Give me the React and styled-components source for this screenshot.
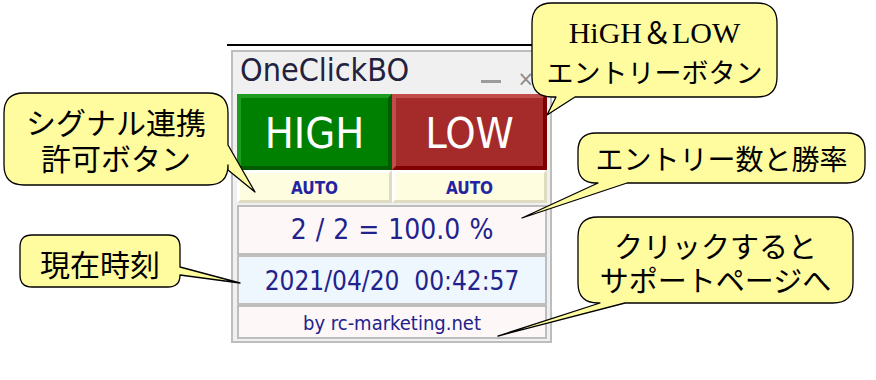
import React from "react";
import styled, { createGlobalStyle } from "styled-components";

const GlobalStyle = createGlobalStyle`
  html, body { margin: 0; padding: 0; background: #ffffff; }
  * { box-sizing: border-box; }
`;

const PANEL_FONT = `"DejaVu Sans Condensed", "DejaVu Sans", sans-serif`;

const Stage = styled.div`
  position: relative;
  width: 876px;
  height: 380px;
  overflow: hidden;
  padding: 44px 0 0 227px;
  background: #ffffff;
`;

const TopRule = styled.div`
  width: 320px;
  height: 2px;
  background: #000000;
`;

const Panel = styled.div`
  margin: 4px 0 0 4px;
  width: 321px;
  border: 2px solid #bdbdbd;
  background: #f0f0f0;
  padding: 0 3px 2px 4px;
  display: flex;
  flex-direction: column;
  font-family: ${PANEL_FONT};
  font-stretch: condensed;
`;

const TitleBar = styled.div`
  height: 42px;
  display: flex;
  align-items: flex-start;
  padding: 2px 13px 0 3px;
`;

const Title = styled.span`
  font-size: 32px;
  line-height: 32px;
  color: #22223e;
`;

const Controls = styled.div`
  margin-left: auto;
  display: flex;
  align-items: center;
  gap: 16px;
  height: 40px;
`;

const MinBar = styled.span`
  display: block;
  width: 20px;
  height: 3px;
  margin-top: 14px;
  background: #9c9c9c;
`;

const CloseGlyph = styled.span`
  font-family: "DejaVu Sans", sans-serif;
  font-size: 22px;
  line-height: 22px;
  margin-top: 10px;
  color: #8a8a8a;
`;

const ButtonRow = styled.div`
  display: grid;
  grid-template-columns: 155px 155px;
  height: 76px;
`;

const TradeButton = styled.div`
  display: flex;
  align-items: center;
  justify-content: center;
  border: 4px solid;
  border-color: ${(p) =>
    p.$kind === "high"
      ? "#1f9b1f #005c00 #005c00 #1f9b1f"
      : "#c24b4b #800000 #800000 #c24b4b"};
  background: ${(p) => (p.$kind === "high" ? "#008000" : "#a52a2a")};
  color: #ffffff;
  font-size: 43px;
  line-height: 1;
  padding-top: 2px;
`;

const AutoRow = styled.div`
  display: grid;
  grid-template-columns: 155px 155px;
  height: 33px;
`;

const AutoButton = styled.div`
  display: flex;
  align-items: center;
  justify-content: center;
  border: 3px solid;
  border-color: #ffffff #deddc2 #deddc2 #ffffff;
  background: #fffde0;
  color: #2424a2;
  font-size: 17px;
  font-weight: bold;
  padding-top: 3px;
`;

const InfoBox = styled.div`
  height: ${(p) => p.$h}px;
  margin-top: ${(p) => p.$mt || 0}px;
  border: 2px solid #bdbdbd;
  background: ${(p) => p.$bg};
  display: flex;
  align-items: center;
  justify-content: center;
  color: #22228c;
  font-size: ${(p) => p.$size}px;
  word-spacing: ${(p) => p.$ws || 0}px;
  line-height: 1;
  padding-top: ${(p) => p.$pt || 0}px;
  white-space: pre;
`;

/* ---------- callouts (overlay annotations) ---------- */

const CalloutBox = styled.div`
  position: absolute;
  left: ${(p) => p.$x}px;
  top: ${(p) => p.$y}px;
  width: ${(p) => p.$w}px;
  height: ${(p) => p.$h}px;
  z-index: 5;
  display: flex;
  flex-direction: column;
  align-items: center;
  justify-content: center;
  padding-top: ${(p) => p.$shift || 0}px;
  font-family: "Noto Sans CJK JP", sans-serif;
  font-size: ${(p) => p.$size}px;
  line-height: ${(p) => p.$lh}px;
  color: #000000;
`;

const Shape = styled.svg`
  position: absolute;
  left: 0;
  top: 0;
  overflow: visible;
  z-index: -1;
`;

const Line = styled.span`
  display: block;
  white-space: nowrap;
  font-size: ${(p) => (p.$size ? `${p.$size}px` : "inherit")};
  font-family: ${(p) =>
    p.$serif
      ? `"Liberation Serif", "Noto Sans CJK JP", serif`
      : "inherit"};
`;

function bubblePath(w, h, r, t) {
  const { side, a, b, tx, ty } = t;
  if (side === "bottom") {
    return `M${r},0 H${w - r} Q${w},0 ${w},${r} V${h - r} Q${w},${h} ${w - r},${h} H${b} L${tx},${ty} L${a},${h} H${r} Q0,${h} 0,${h - r} V${r} Q0,0 ${r},0 Z`;
  }
  return `M${r},0 H${w - r} Q${w},0 ${w},${r} V${a} L${tx},${ty} L${w},${b} V${h - r} Q${w},${h} ${w - r},${h} H${r} Q0,${h} 0,${h - r} V${r} Q0,0 ${r},0 Z`;
}

function Callout({ x, y, w, h, r, tail, size, lh, shift, children }) {
  return (
    <CalloutBox $x={x} $y={y} $w={w} $h={h} $size={size} $lh={lh} $shift={shift}>
      <Shape width={w} height={h}>
        <path
          d={bubblePath(w, h, r, tail)}
          fill="#fffb9f"
          stroke="#000000"
          strokeWidth="1.3"
          strokeLinejoin="round"
        />
      </Shape>
      {children}
    </CalloutBox>
  );
}

export default function App() {
  return (
    <>
      <GlobalStyle />
      <Stage>
        <TopRule />
        <Panel>
          <TitleBar>
            <Title>OneClickBO</Title>
            <Controls>
              <MinBar />
              <CloseGlyph>×</CloseGlyph>
            </Controls>
          </TitleBar>
          <ButtonRow>
            <TradeButton $kind="high">HIGH</TradeButton>
            <TradeButton $kind="low">LOW</TradeButton>
          </ButtonRow>
          <AutoRow>
            <AutoButton>AUTO</AutoButton>
            <AutoButton>AUTO</AutoButton>
          </AutoRow>
          <InfoBox $h={50} $mt={2} $bg="#fdf8f7" $size={28} $ws={1}>
            2 / 2 = 100.0 %
          </InfoBox>
          <InfoBox $h={50} $bg="#eef6fe" $size={26} $pt={2}>
            2021/04/20  00:42:57
          </InfoBox>
          <InfoBox $h={34} $bg="#fdf8f7" $size={20} $pt={2}>
            by rc-marketing.net
          </InfoBox>
        </Panel>

        <Callout
          x={4}
          y={93}
          w={224}
          h={92}
          r={20}
          size={30}
          lh={36}
          tail={{ side: "right", a: 52, b: 77, tx: 251, ty: 99 }}
        >
          <Line>シグナル連携</Line>
          <Line>許可ボタン</Line>
        </Callout>

        <Callout
          x={532}
          y={3}
          w={245}
          h={94}
          r={20}
          size={27}
          lh={39}
          shift={4}
          tail={{ side: "bottom", a: 24, b: 43, tx: 15, ty: 112 }}
        >
          <Line $serif $size={30}>HiGH＆LOW</Line>
          <Line>エントリーボタン</Line>
        </Callout>

        <Callout
          x={578}
          y={133}
          w={287}
          h={50}
          r={18}
          size={28}
          lh={34}
          tail={{ side: "bottom", a: 20, b: 49, tx: -56, ty: 85 }}
        >
          <Line>エントリー数と勝率</Line>
        </Callout>

        <Callout
          x={20}
          y={235}
          w={160}
          h={52}
          r={12}
          size={30}
          lh={36}
          shift={4}
          tail={{ side: "right", a: 32, b: 40, tx: 220, ty: 48 }}
        >
          <Line>現在時刻</Line>
        </Callout>

        <Callout
          x={578}
          y={217}
          w={275}
          h={86}
          r={20}
          size={29}
          lh={34}
          shift={4}
          tail={{ side: "bottom", a: 22, b: 47, tx: -80, ty: 119 }}
        >
          <Line>クリックすると</Line>
          <Line>サポートページへ</Line>
        </Callout>
      </Stage>
    </>
  );
}
